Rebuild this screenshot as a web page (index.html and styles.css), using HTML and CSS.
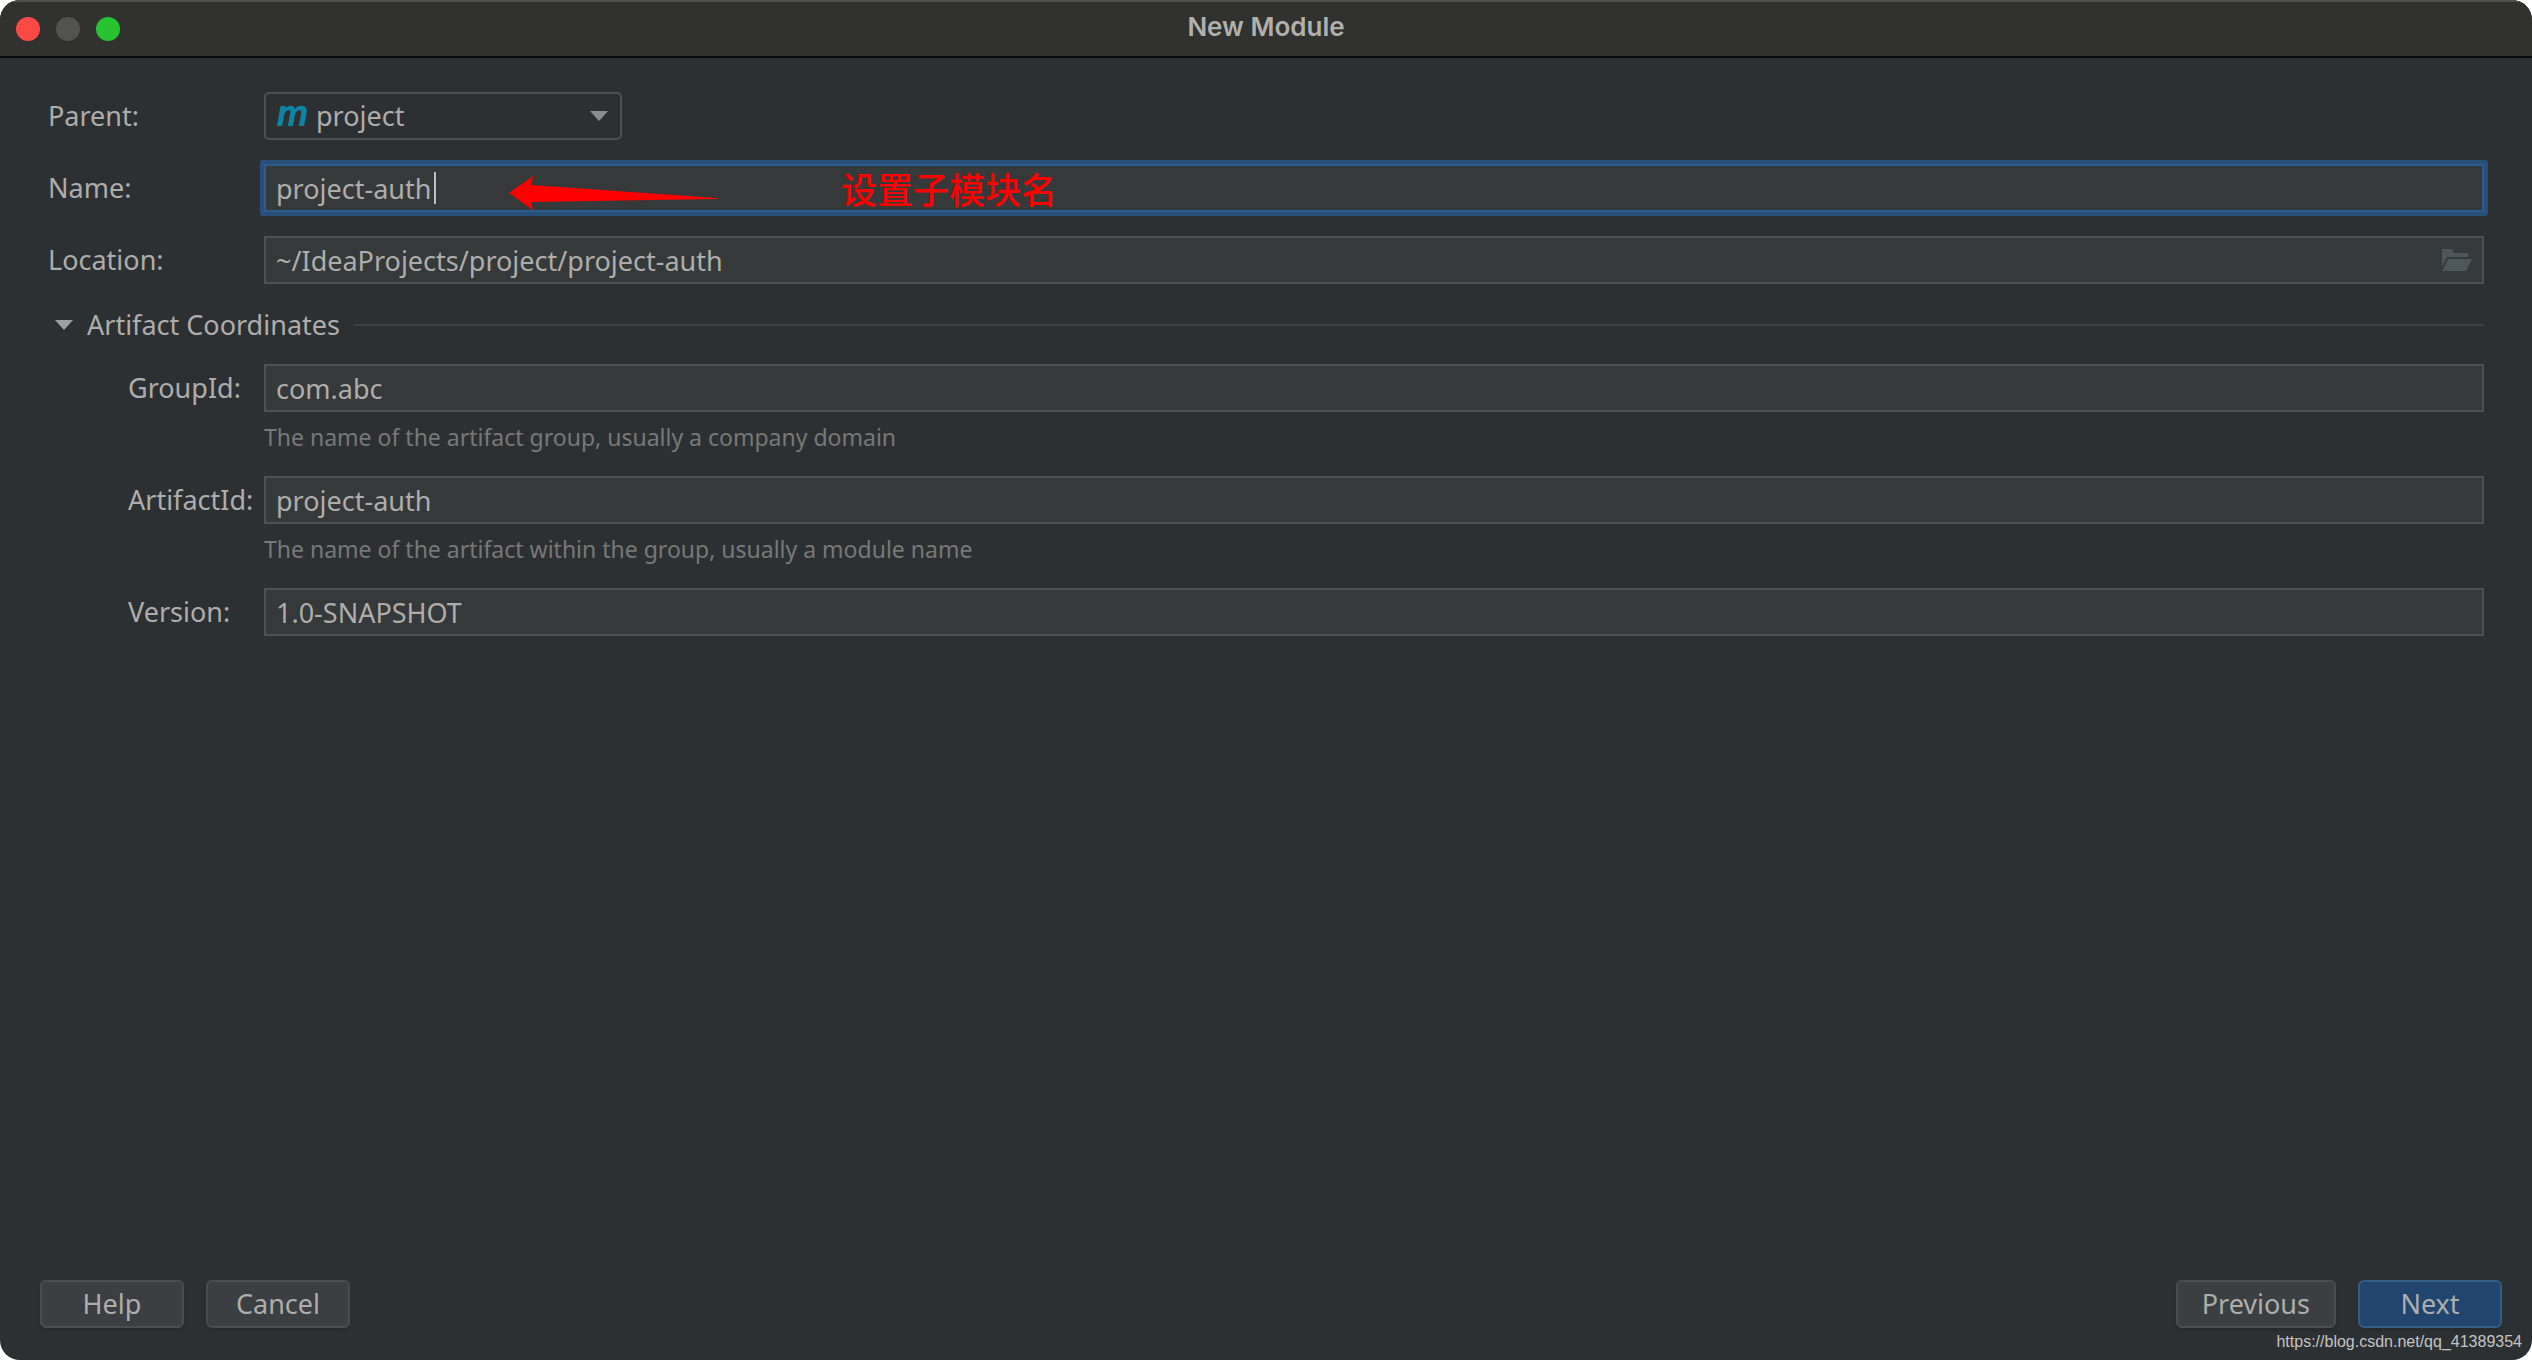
FILE: index.html
```html
<!DOCTYPE html>
<html lang="en">
<head>
<meta charset="utf-8">
<title>New Module</title>
<link rel="stylesheet" href="styles.css">
</head>
<body>
<div class="window">
  <header class="titlebar">
    <div class="lights">
      <button class="light close" type="button" aria-label="Close"></button>
      <button class="light minimize" type="button" aria-label="Minimize" disabled></button>
      <button class="light zoom" type="button" aria-label="Zoom"></button>
    </div>
    <h1 class="title">New Module</h1>
  </header>

  <form class="dialog">
    <div class="row">
      <label class="label" for="parent">Parent:</label>
      <div class="combo">
        <select id="parent" class="select">
          <option>project</option>
        </select>
        <svg class="maven" width="30" height="20" viewBox="0 0 30 20" aria-hidden="true">
          <path fill="#0e84a5" d="M3.500 0H8.500L8.300 2.500C10 .5 12 -.3 14 -.2C16.300 0 17.500 1.200 17.800 3C19.500 .8 22 -.3 24.500 -.2C28.500 0 30.500 2.500 29.700 6.500L27 20H21.800L24.200 7.500C24.600 5.200 24 4.200 22.500 4.200C20.300 4.200 18.600 6 18 9L15.900 20H10.800L13.200 7.500C13.600 5.200 13.100 4.200 11.600 4.200C9.400 4.200 7.800 6.200 7.200 9L5.100 20H0Z"/>
        </svg>
        <svg class="arrow" width="18" height="10" viewBox="0 0 18 10" aria-hidden="true"><path fill="#8b8e90" d="M0 0H18L9 10Z"/></svg>
      </div>
    </div>

    <div class="row">
      <label class="label" for="name">Name:</label>
      <div class="control">
        <input id="name" class="field focused" type="text" value="project-auth">
        <span class="caret"></span>
        <svg class="pointer" width="208" height="34" viewBox="0 0 208 34" aria-hidden="true"><path fill="#ff0000" d="M0 17 24 0 22 9 208 22 208 23 22 26 24 34Z"/></svg>
        <span class="note" lang="zh-CN">设置子模块名</span>
      </div>
    </div>

    <div class="row">
      <label class="label" for="location">Location:</label>
      <div class="control">
        <input id="location" class="field" type="text" value="~/IdeaProjects/project/project-auth">
        <button class="browse" type="button" aria-label="Browse">
          <svg width="30" height="22" viewBox="0 0 30 22" aria-hidden="true"><path fill="#4d565b" d="M0 0H10L12 4H26V8H5L0 18ZM6 10H30L24 22H0Z"/></svg>
        </button>
      </div>
    </div>

    <fieldset class="section">
      <legend class="legend">
        <svg width="18" height="10" viewBox="0 0 18 10" aria-hidden="true"><path fill="#9da0a2" d="M0 0H18L9 10Z"/></svg>
        <span>Artifact Coordinates</span>
      </legend>

      <div class="row">
        <label class="label nested" for="group">GroupId:</label>
        <input id="group" class="field" type="text" value="com.abc" aria-describedby="group-hint">
      </div>
      <p id="group-hint" class="hint">The name of the artifact group, usually a company domain</p>

      <div class="row">
        <label class="label nested" for="artifact">ArtifactId:</label>
        <input id="artifact" class="field" type="text" value="project-auth" aria-describedby="artifact-hint">
      </div>
      <p id="artifact-hint" class="hint">The name of the artifact within the group, usually a module name</p>

      <div class="row">
        <label class="label nested" for="version">Version:</label>
        <input id="version" class="field" type="text" value="1.0-SNAPSHOT">
      </div>
    </fieldset>

    <footer class="actions">
      <button class="button" type="button">Help</button>
      <button class="button" type="button">Cancel</button>
      <button class="button previous" type="button">Previous</button>
      <button class="button primary" type="submit">Next</button>
    </footer>
  </form>
  <span class="watermark">https://blog.csdn.net/qq_41389354</span>
</div>
</body>
</html>
```
FILE: styles.css
```css
* {
  box-sizing: border-box;
}

body {
  margin: 0;
  background: #ffffff;
  color: #adadad;
  font-family: "Noto Sans", "Open Sans", sans-serif;
  font-size: 27px;
  line-height: 34px;
}

input,
select,
button {
  font: inherit;
  color: inherit;
}

.window {
  position: relative;
  display: flex;
  flex-direction: column;
  min-height: 100vh;
  overflow: hidden;
  border-radius: 20px;
  background: #2d3032;
}

.titlebar {
  display: grid;
  grid-template-columns: 1fr auto 1fr;
  align-items: center;
  height: 58px;
  padding: 0 16px;
  border-top: 2px solid #50504e;
  border-bottom: 2px solid #0a0a0b;
  background: #31312f;
}

.lights {
  display: flex;
  gap: 16px;
}

.light {
  width: 24px;
  height: 24px;
  padding: 0;
  border: 0;
  border-radius: 50%;
}

.close { background: #ff4945; }
.minimize { background: #525250; }
.zoom { background: #29c231; }

.title {
  margin: 0;
  padding-bottom: 4px;
  color: #b0b0ae;
  font-family: Inter, sans-serif;
  font-size: 26px;
  font-weight: 600;
}

.dialog {
  display: flex;
  flex: 1;
  flex-direction: column;
  gap: 24px;
  padding: 34px 48px 32px;
}

.row {
  display: grid;
  grid-template-columns: 216px 1fr;
  align-items: center;
}

.label.nested {
  padding-left: 80px;
}

.control {
  position: relative;
}

.field {
  display: block;
  width: 100%;
  height: 48px;
  padding: 0 10px;
  border: 2px solid #505050;
  border-radius: 0;
  outline: 0;
  background: #363939;
}

.focused {
  border-color: #2d5c8c;
  border-radius: 1px;
  box-shadow: 0 0 0 4px #284f78;
}

.caret {
  position: absolute;
  top: 8px;
  left: 170px;
  width: 2px;
  height: 32px;
  background: #c0c0c0;
}

.pointer {
  position: absolute;
  top: 12px;
  left: 245px;
}

.note {
  position: absolute;
  top: 4px;
  left: 577px;
  color: #ff0000;
  font-family: "Noto Sans CJK SC", sans-serif;
  font-size: 36px;
  font-weight: 500;
  line-height: 40px;
}

.combo {
  display: grid;
  width: 358px;
  align-items: center;
}

.combo > * {
  grid-area: 1 / 1;
}

.select {
  width: 100%;
  height: 48px;
  padding: 0 48px 0 50px;
  border: 2px solid #505050;
  border-radius: 5px;
  appearance: none;
  background: #2d3032;
}

.maven {
  margin-left: 13px;
  overflow: visible;
  pointer-events: none;
}

.arrow {
  justify-self: end;
  margin-right: 14px;
  pointer-events: none;
}

.browse {
  position: absolute;
  top: 0;
  right: 0;
  display: flex;
  align-items: center;
  height: 48px;
  padding: 0 12px;
  border: 0;
  background: none;
}

.section {
  min-width: 0;
  margin: 0;
  padding: 0;
  border: 0;
}

.legend {
  display: flex;
  align-items: center;
  gap: 14px;
  width: 100%;
  margin-bottom: 22px;
  padding: 0 0 0 7px;
}

.legend::after {
  flex: 1;
  height: 2px;
  background: #404040;
  content: "";
}

.hint {
  margin: 10px 0 24px 216px;
  color: #787878;
  font-size: 23px;
  line-height: 30px;
}

.actions {
  display: flex;
  gap: 22px;
  margin: auto -18px 0 -8px;
}

.button {
  min-width: 144px;
  height: 48px;
  padding: 0 24px;
  border: 2px solid #4b4d4d;
  border-radius: 6px;
  background: #3c3f41;
  box-shadow: 0 3px 2px #2a2b2d;
}

.previous {
  margin-left: auto;
}

.primary {
  border-color: #315e82;
  background: #22456f;
}

.watermark {
  position: absolute;
  right: 10px;
  bottom: 8px;
  color: #c4c4c4;
  font-family: "Liberation Sans", Arial, sans-serif;
  font-size: 16px;
  line-height: 20px;
}
```
